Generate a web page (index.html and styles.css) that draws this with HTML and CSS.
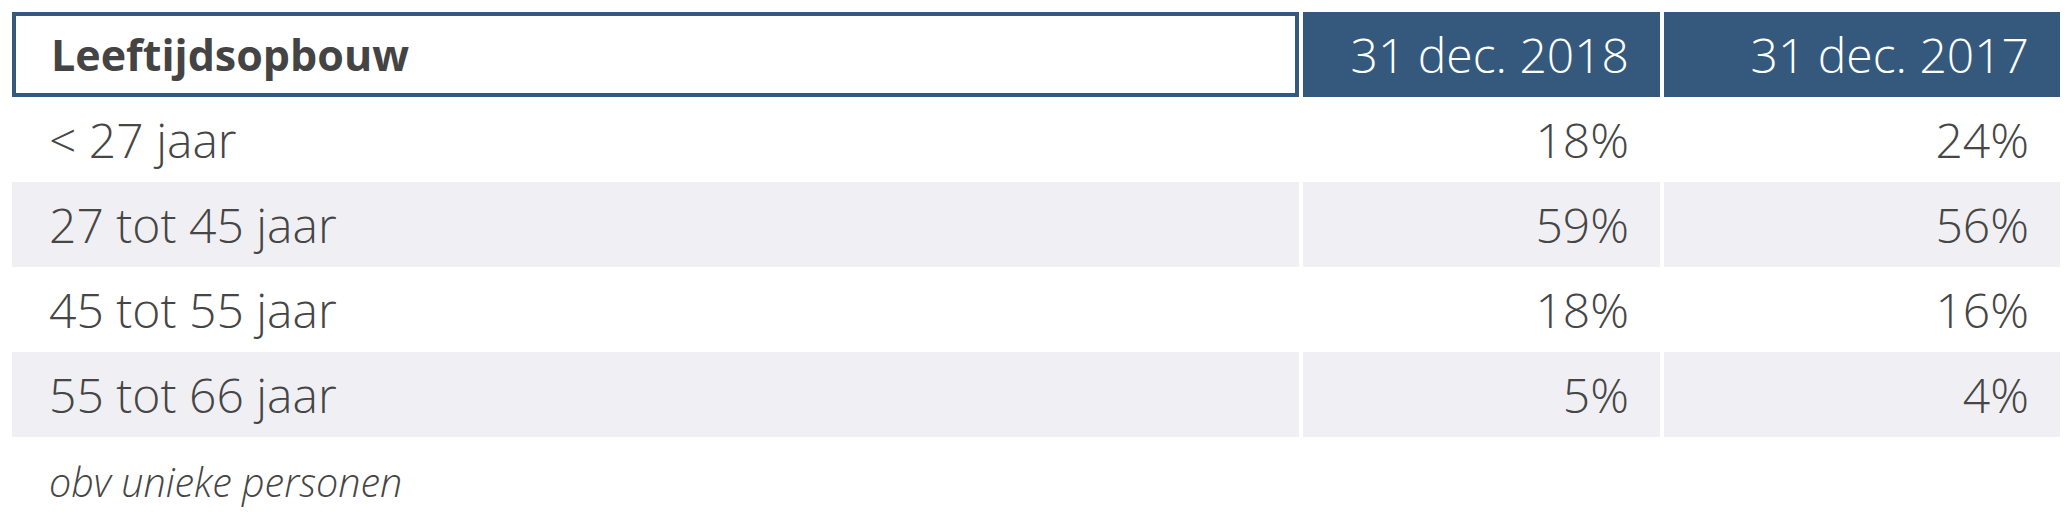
FILE: index.html
```html
<!DOCTYPE html>
<html lang="nl">
<head>
<meta charset="utf-8">
<title>Leeftijdsopbouw</title>
<link rel="stylesheet" href="styles.css">
</head>
<body>
<div class="wrap">
  <div class="grid">
    <div class="cell head-label">Leeftijdsopbouw</div>
    <div class="cell head-date">31 dec. 2018</div>
    <div class="cell head-date">31 dec. 2017</div>

    <div class="cell label">&lt; 27 jaar</div>
    <div class="cell num">18%</div>
    <div class="cell num">24%</div>

    <div class="cell label alt">27 tot 45 jaar</div>
    <div class="cell num alt">59%</div>
    <div class="cell num alt">56%</div>

    <div class="cell label">45 tot 55 jaar</div>
    <div class="cell num">18%</div>
    <div class="cell num">16%</div>

    <div class="cell label alt">55 tot 66 jaar</div>
    <div class="cell num alt">5%</div>
    <div class="cell num alt">4%</div>
  </div>
  <p class="note">obv unieke personen</p>
</div>
</body>
</html>
```

FILE: styles.css
```css
html, body {
  margin: 0;
  padding: 0;
  background: #ffffff;
}

body {
  font-family: "Open Sans", "Liberation Sans", sans-serif;
  color: #464646;
}

.wrap {
  padding: 12px 10px 0 12px;
}

.grid {
  display: grid;
  grid-template-columns: 1fr 357px 396px;
  grid-auto-rows: 85px;
  column-gap: 4px;
}

.cell {
  display: flex;
  align-items: center;
  box-sizing: border-box;
  font-size: 48px;
  font-weight: 300;
  white-space: nowrap;
}

.head-label {
  border: 4px solid #34597c;
  padding-left: 35px;
  font-size: 43px;
  font-weight: 700;
  color: #444444;
}

.head-date {
  background: #34597c;
  color: #ffffff;
  justify-content: flex-end;
  padding-right: 31px;
}

.label {
  padding-left: 37px;
}

.num {
  justify-content: flex-end;
  padding-right: 31px;
}

.alt {
  background: #f0f0f4;
}

.note {
  margin: 0;
  padding: 18px 0 0 37px;
  font-size: 39.5px;
  font-style: italic;
  font-weight: 300;
  color: #464646;
}
```
